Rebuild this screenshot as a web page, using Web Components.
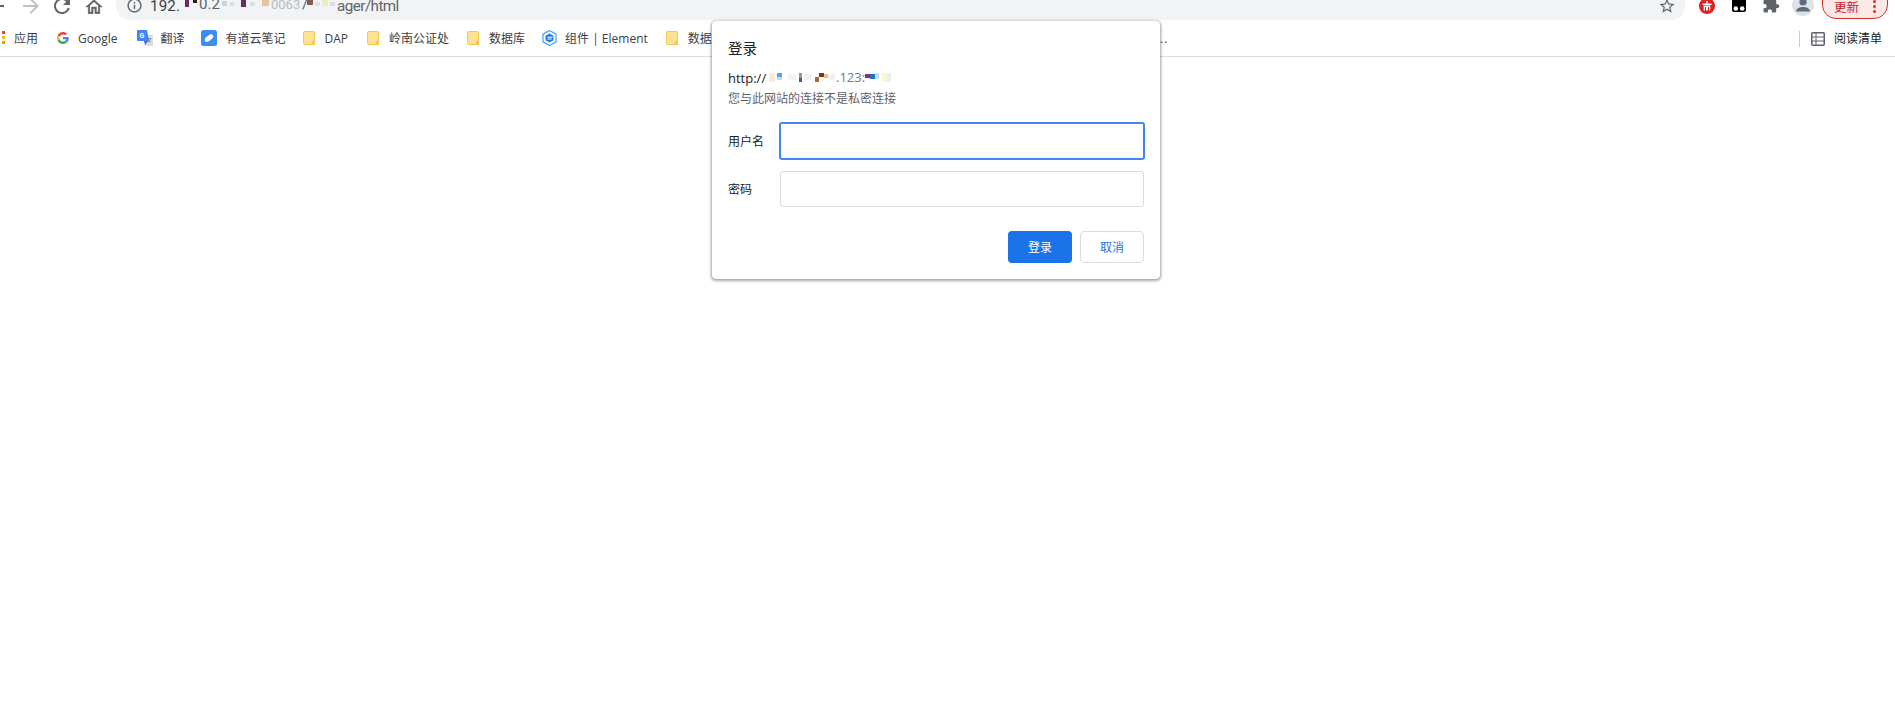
<!DOCTYPE html>
<html lang="zh">
<head>
<meta charset="utf-8">
<title>登录</title>
<style>
    html, body { margin: 0; height: 100%; background: #fff; }
    body { font-family: "Open Sans", "Noto Sans CJK SC", sans-serif; }
</style>
</head>
<body>
<browser-page>
    <browser-toolbar></browser-toolbar>
    <bookmark-bar>
        <bookmark-item label="应用" icon="apps" gap="8" left="2"></bookmark-item>
        <bookmark-item label="Google" icon="google" gap="9" left="19"></bookmark-item>
        <bookmark-item label="翻译" icon="translate" gap="7" left="20"></bookmark-item>
        <bookmark-item label="有道云笔记" icon="youdao" gap="8" left="17"></bookmark-item>
        <bookmark-item label="DAP" icon="folder" gap="10" left="17"></bookmark-item>
        <bookmark-item label="岭南公证处" icon="folder" gap="10" left="19"></bookmark-item>
        <bookmark-item label="数据库" icon="folder" gap="10" left="18"></bookmark-item>
        <bookmark-item label="组件 | Element" icon="element" gap="8" left="17"></bookmark-item>
        <bookmark-item label="数据治理" icon="folder" gap="10" left="18"></bookmark-item>
    </bookmark-bar>
    <login-dialog></login-dialog>
</browser-page>

<script>
class BrowserPage extends HTMLElement {
    constructor() {
        super();

        this.attachShadow({ mode: 'open' });

        this.shadowRoot.innerHTML = `
            <style>
                :host {
                    display: block;
                    position: relative;
                    height: 719px;
                    overflow: hidden;
                    background: #fff;
                }
            </style>
            <slot></slot>
        `;
    }
}

class BrowserToolbar extends HTMLElement {
    constructor() {
        super();

        this.attachShadow({ mode: 'open' });

        this.shadowRoot.innerHTML = `
            <style>
                :host {
                    display: flex;
                    align-items: flex-end;
                    height: 20px;
                    overflow: hidden;
                    background: #fff;
                    color: #5f6368;
                }
                svg { display: block; flex: none; fill: currentColor; }
                .back { margin: 0 0 2px -16px; }
                .forward { margin: 0 0 2px 11px; color: #bdc1c6; }
                .reload { margin: 0 0 2px 7px; }
                .home { margin: 0 0 3px 10px; stroke: currentColor; stroke-width: .4; }
                .omnibox {
                    flex: none;
                    display: flex;
                    align-items: flex-end;
                    box-sizing: border-box;
                    width: 1569px;
                    height: 36px;
                    margin-left: 12px;
                    padding: 0 9px 5px 10px;
                    background: #f1f3f4;
                    border-radius: 0 0 14px 14px;
                }
                .info { margin: 0 7px 1px 0; }
                .url {
                    font: 15.2px/18px Roboto, "Liberation Sans", sans-serif;
                    letter-spacing: .12px;
                    color: #5f6368;
                }
                .url.host { color: #3c4043; }
                .url.path { letter-spacing: -.55px; }
                .mosaic { margin-bottom: 3px; fill: none; }
                .star { margin-left: auto; }
                .red { margin: 0 0 6px 14px; }
                .tamper { margin: 0 0 8px 16px; }
                .puzzle { margin: 0 0 6px 15px; }
                .avatar { margin: 0 0 4px 12px; }
                update-chip { margin: 0 0 1px 8px; }
            </style>
            <svg class="back" width="24" height="24" viewBox="0 0 24 24"><path d="M20 11H7.83l5.59-5.59L12 4l-8 8 8 8 1.41-1.41L7.83 13H20v-2z"/></svg>
            <svg class="forward" width="24" height="24" viewBox="0 0 24 24"><path d="M12 4l-1.41 1.41L16.17 11H4v2h12.17l-5.58 5.59L12 20l8-8z"/></svg>
            <svg class="reload" width="24" height="24" viewBox="0 0 24 24"><path d="M17.65 6.35A7.958 7.958 0 0 0 12 4c-4.42 0-7.99 3.58-7.99 8s3.57 8 7.99 8c3.73 0 6.84-2.55 7.73-6h-2.08A5.99 5.99 0 0 1 12 18c-3.31 0-6-2.69-6-6s2.69-6 6-6c1.66 0 3.14.69 4.22 1.78L13 11h7V4l-2.35 2.35z"/></svg>
            <svg class="home" width="20" height="20" viewBox="0 0 24 24"><path d="M12 5.69l5 4.5V18h-2v-6H9v6H7v-7.81l5-4.5M12 3L2 12h3v8h6v-6h2v6h6v-8h3L12 3z"/></svg>
            <div class="omnibox">
                <svg class="info" width="17" height="17" viewBox="0 0 24 24"><path d="M11 7h2v2h-2zm0 4h2v6h-2zm1-9C6.48 2 2 6.48 2 12s4.48 10 10 10 10-4.48 10-10S17.52 2 12 2zm0 18c-4.41 0-8-3.59-8-8s3.59-8 8-8 8 3.59 8 8-3.59 8-8 8z"/></svg>
                <span class="url host">192.</span>
                <svg class="mosaic" width="157" height="16" viewBox="0 0 157 16">
                    <rect x="5" y="1" width="4" height="10" fill="#6a2a70"/>
                    <rect x="13" y="1" width="4" height="6" fill="#222"/>
                    <text x="19" y="13" font-size="15" fill="#5f6368" font-family="Roboto, sans-serif">0.2</text>
                    <rect x="42" y="5" width="5" height="5" fill="#c9d3da"/>
                    <rect x="50" y="6" width="4" height="4" fill="#d8dde0"/>
                    <rect x="61" y="1" width="5" height="10" fill="#6a2a70"/>
                    <rect x="70" y="6" width="5" height="4" fill="#dcdfe2"/>
                    <rect x="82" y="4" width="7" height="6" fill="#e8c39e"/>
                    <text x="91" y="13" font-size="13" fill="#b9bdc2" font-family="Roboto, sans-serif">0063</text>
                    <text x="122" y="13" font-size="15" fill="#5f6368" font-family="Roboto, sans-serif">/</text>
                    <rect x="127" y="3" width="6" height="6" fill="#8a5a50"/>
                    <rect x="135" y="6" width="5" height="4" fill="#dfe3e6"/>
                    <rect x="142" y="4" width="6" height="6" fill="#eeeac0"/>
                    <rect x="150" y="6" width="5" height="4" fill="#d8dde0"/>
                </svg>
                <span class="url path">ager/html</span>
                <svg class="star" width="18" height="18" viewBox="0 0 24 24"><path d="M22 9.24l-7.19-.62L12 2 9.19 8.63 2 9.24l5.46 4.73L5.82 21 12 17.27 18.18 21l-1.63-7.03L22 9.24zM12 15.4l-3.76 2.27 1-4.28-3.32-2.88 4.38-.38L12 6.1l1.71 4.04 4.38.38-3.32 2.88 1 4.28L12 15.4z"/></svg>
            </div>
            <svg class="red" width="16" height="16" viewBox="0 0 16 16" style="fill:none">
                <circle cx="8" cy="8" r="8" fill="#e02020"/>
                <path d="M3.5 5.5h9v1.4h-9zM7.3 3h1.4v3H7.3zM4.7 7.5h6.6v5H10V9H9v3.5H7V9H6v3.5H4.7z" fill="#fff"/>
            </svg>
            <svg class="tamper" width="16" height="13" viewBox="0 0 16 13" style="fill:none">
                <rect x="1" y="-2" width="14" height="15" rx="2" fill="#000"/>
                <circle cx="4.8" cy="9.5" r="2.3" fill="#fff"/>
                <circle cx="11.2" cy="9.5" r="2.3" fill="#fff"/>
            </svg>
            <svg class="puzzle" width="18" height="18" viewBox="0 0 24 24"><path d="M20.5 11H19V7c0-1.1-.9-2-2-2h-4V3.5C13 2.12 11.88 1 10.5 1S8 2.12 8 3.5V5H4c-1.1 0-1.99.9-1.99 2v3.8H3.5c1.49 0 2.7 1.21 2.7 2.7s-1.21 2.7-2.7 2.7H2V20c0 1.1.9 2 2 2h3.8v-1.5c0-1.49 1.21-2.7 2.7-2.7 1.49 0 2.7 1.21 2.7 2.7V22H17c1.1 0 2-.9 2-2v-4h1.5c1.38 0 2.5-1.12 2.5-2.5S21.88 11 20.5 11z"/></svg>
            <svg class="avatar" width="22" height="22" viewBox="0 0 22 22" style="fill:none">
                <circle cx="11" cy="11" r="11" fill="#dee1e6"/>
                <circle cx="11" cy="8" r="3.6" fill="#5b6b80"/>
                <path d="M4 17.5c0-3.3 4-4.6 7-4.6s7 1.3 7 4.6z" fill="#5b6b80"/>
            </svg>
            <update-chip>更新</update-chip>
        `;
    }
}

class UpdateChip extends HTMLElement {
    constructor() {
        super();

        this.attachShadow({ mode: 'open' });

        this.shadowRoot.innerHTML = `
            <style>
                :host {
                    display: flex;
                    align-items: flex-end;
                    flex: none;
                    box-sizing: border-box;
                    width: 66px;
                    height: 32px;
                    padding: 0 0 3px 11px;
                    background: #fce8e6;
                    border: 1px solid #d93025;
                    border-radius: 14px;
                    color: #c5221f;
                    font: 12.5px/16px "Noto Sans CJK SC", sans-serif;
                }
                .dots { display: grid; gap: 2px; margin: 0 0 2px 14px; }
                .dots i { width: 3px; height: 3px; border-radius: 50%; background: #d93025; }
            </style>
            <slot></slot>
            <div class="dots"><i></i><i></i><i></i></div>
        `;
    }
}

class BookmarkBar extends HTMLElement {
    constructor() {
        super();

        this.attachShadow({ mode: 'open' });

        this.shadowRoot.innerHTML = `
            <style>
                :host {
                    display: flex;
                    align-items: center;
                    box-sizing: border-box;
                    height: 37px;
                    padding: 1px 13px 0 0;
                    background: #fff;
                    border-bottom: 1px solid #dadce0;
                    color: #3c4043;
                    font: 12px/16px "Open Sans", "Noto Sans CJK SC", sans-serif;
                }
                .more { margin-left: 420px; letter-spacing: 1px; }
                .reader {
                    display: flex;
                    align-items: center;
                    gap: 9px;
                    height: 16px;
                    margin-left: auto;
                    padding-left: 11px;
                    border-left: 1px solid #c8cacd;
                    color: #202124;
                }
                svg { display: block; }
            </style>
            <slot></slot>
            <span class="more">...</span>
            <div class="reader">
                <svg width="14" height="14" viewBox="0 0 14 14" fill="none" stroke="#5f6368" stroke-width="1.5">
                    <rect x=".75" y=".75" width="12.5" height="12.5" rx="1"/>
                    <path d="M5 1v12M1 5h12M1 9h12" stroke-width="1"/>
                </svg>
                <span>阅读清单</span>
            </div>
        `;
    }
}

class BookmarkItem extends HTMLElement {
    constructor() {
        super();

        this.attachShadow({ mode: 'open' });
    }

    connectedCallback() {
        const icons = {
            apps: `<svg width="4" height="14" viewBox="0 0 4 14"><rect y="0" width="3" height="3" fill="#ea4335"/><rect y="5" width="3" height="3" fill="#fbbc05"/><rect y="10" width="3" height="3" fill="#f29900"/></svg>`,
            google: `<svg width="12" height="12" viewBox="0 0 48 48"><path fill="#EA4335" d="M24 9.5c3.54 0 6.71 1.22 9.21 3.6l6.85-6.85C35.9 2.38 30.47 0 24 0 14.62 0 6.51 5.38 2.56 13.22l7.98 6.19C12.43 13.72 17.74 9.5 24 9.5z"/><path fill="#4285F4" d="M46.98 24.55c0-1.57-.15-3.09-.38-4.55H24v9.02h12.94c-.58 2.96-2.26 5.48-4.78 7.18l7.73 6c4.51-4.18 7.09-10.36 7.09-17.65z"/><path fill="#FBBC05" d="M10.53 28.59c-.48-1.45-.76-2.99-.76-4.59s.27-3.14.76-4.59l-7.98-6.19C.92 16.46 0 20.12 0 24c0 3.88.92 7.54 2.56 10.78l7.97-6.19z"/><path fill="#34A853" d="M24 48c6.48 0 11.93-2.13 15.89-5.81l-7.73-6c-2.15 1.45-4.92 2.3-8.16 2.3-6.26 0-11.57-4.22-13.47-9.91l-7.98 6.19C6.51 42.62 14.62 48 24 48z"/></svg>`,
            translate: `<svg width="16" height="16" viewBox="0 0 16 16"><path d="M7 5h9v11H8z" fill="#dcdcdc"/><path d="M1 0h9l2 11H1a1 1 0 0 1-1-1V1a1 1 0 0 1 1-1z" fill="#4285f4"/><path d="M7 11l1 4 3-4z" fill="#3367d6"/><text x="2.5" y="8" font-size="7" font-weight="700" fill="#fff" font-family="Roboto, sans-serif">G</text><path d="M10.5 8.5H14M12 8v1M13.5 9c-.4 1.5-1.5 2.5-2.6 3M11 9.8c.6 1 1.4 1.8 2.5 2.2" stroke="#777" stroke-width=".8" fill="none"/></svg>`,
            youdao: `<svg width="16" height="16" viewBox="0 0 16 16"><rect width="16" height="16" rx="2.5" fill="#3b8df2"/><path d="M4 11.5c-.4-1.8 0-3.4 1.3-4.5l4-2.8c.6-.4 1.5-.3 1.9.3l.9 1.3c.4.6.3 1.4-.2 1.9l-3.2 3c-1.2 1-2.9 1.3-4.7.8z" fill="#fff"/></svg>`,
            folder: `<svg width="12" height="14" viewBox="0 0 12 14"><path d="M1.5.5h9a1 1 0 0 1 1 1v9l-2 3h-8a1 1 0 0 1-1-1v-11a1 1 0 0 1 1-1z" fill="#fde293" stroke="#f2c94c"/><rect x="9" y="10" width="3" height="4" fill="#f2c94c"/></svg>`,
            element: `<svg width="15" height="16" viewBox="0 0 15 16"><path d="M7.5.5L14 4.2v7.6l-6.5 3.7L1 11.8V4.2z" fill="#fff" stroke="#409eff" stroke-width="1.2"/><path d="M7.5 3.5l4 2.2v4.600l-4 2.200-4-2.200V5.700z" fill="#1a7fe0"/><path d="M5.5 7.2h5M5.5 9h4" stroke="#fff"/></svg>`
        };

        this.shadowRoot.innerHTML = `
            <style>
                :host {
                    display: flex;
                    align-items: center;
                    flex: none;
                    gap: ${this.getAttribute('gap')}px;
                    margin-left: ${this.getAttribute('left')}px;
                }
                svg { display: block; flex: none; margin-top: -2px; }
            </style>
            ${icons[this.getAttribute('icon')]}
            <span>${this.getAttribute('label')}</span>
        `;
    }
}

class LoginDialog extends HTMLElement {
    constructor() {
        super();

        this.attachShadow({ mode: 'open' });

        this.shadowRoot.innerHTML = `
            <style>
                :host {
                    position: absolute;
                    left: 712px;
                    top: 21px;
                    box-sizing: border-box;
                    width: 448px;
                    height: 258px;
                    padding: 17px 16px 16px;
                    background: #fff;
                    border-radius: 4px;
                    box-shadow: 0 0 1px rgba(60, 64, 67, .5), 0 1px 3px 1px rgba(60, 64, 67, .45);
                    color: #202124;
                    font: 12px/16px "Noto Sans CJK SC", sans-serif;
                }
                h1 { margin: 0; font: 400 14.5px/20px "Noto Sans CJK SC", sans-serif; }
                .origin { display: flex; align-items: center; height: 18px; margin-top: 11px; font: 13px/18px "Open Sans", sans-serif; }
                .mosaic { display: block; }
                .note { margin-top: 2px; color: #5f6368; line-height: 18px; }
                form { display: grid; grid-template-columns: 52px 1fr; row-gap: 11px; align-items: center; margin-top: 15px; }
                .field {
                    display: block;
                    box-sizing: border-box;
                    width: 364px;
                    height: 36px;
                    border: 1px solid #dadce0;
                    border-radius: 3px;
                    outline: none;
                    background: #fff;
                    padding: 0 8px;
                }
                .focused { width: 366px; height: 38px; margin-left: -1px; border: 2px solid #4285f4; }
                .actions { display: flex; justify-content: flex-end; gap: 8px; margin-top: 24px; }
                .actions button {
                    box-sizing: border-box;
                    width: 64px;
                    height: 32px;
                    border-radius: 4px;
                    font: 12px/16px "Noto Sans CJK SC", sans-serif;
                }
                .primary { border: 0; background: #1a73e8; color: #fff; }
                .cancel { border: 1px solid #dadce0; background: #fff; color: #1a73e8; }
            </style>
            <h1>登录</h1>
            <div class="origin">
                <span>http://</span>
                <svg class="mosaic" width="130" height="16" viewBox="0 0 130 16" fill="none">
                    <rect x="3" y="3" width="6" height="9" fill="#fde9d8"/>
                    <rect x="11" y="3" width="5" height="4" fill="#5aa6d8"/>
                    <rect x="11" y="7" width="5" height="3" fill="#bfe0f2"/>
                    <rect x="22" y="4" width="8" height="6" fill="#f3f3f3"/>
                    <rect x="33" y="3" width="3" height="5" fill="#8f9f7c"/>
                    <rect x="33" y="8" width="3" height="4" fill="#34659a"/>
                    <rect x="38" y="4" width="8" height="6" fill="#f1f1f1"/>
                    <rect x="53" y="3" width="5" height="4" fill="#8a2f2a"/>
                    <rect x="49" y="7" width="4" height="5" fill="#b06a30"/>
                    <rect x="58" y="4" width="4" height="4" fill="#f0c080"/>
                    <rect x="62" y="4" width="7" height="6" fill="#f1f1f1"/>
                    <text x="70" y="12" font-size="13" fill="#6f7a85" font-family="Open Sans, sans-serif">.123:</text>
                    <rect x="99" y="4" width="5" height="4" fill="#88307f"/>
                    <rect x="104" y="4" width="5" height="5" fill="#2a70b8"/>
                    <rect x="109" y="3" width="4" height="6" fill="#bfe0f2"/>
                    <rect x="116" y="3" width="5" height="9" fill="#fff7c8"/>
                    <rect x="121" y="3" width="4" height="9" fill="#e8f0f4"/>
                </svg>
            </div>
            <div class="note">您与此网站的连接不是私密连接</div>
            <form>
                <label>用户名</label>
                <input class="field focused" type="text" aria-label="用户名">
                <label>密码</label>
                <input class="field" type="password" aria-label="密码">
            </form>
            <div class="actions">
                <button class="primary" type="button">登录</button>
                <button class="cancel" type="button">取消</button>
            </div>
        `;
    }
}

customElements.define('browser-page', BrowserPage);
customElements.define('browser-toolbar', BrowserToolbar);
customElements.define('update-chip', UpdateChip);
customElements.define('bookmark-bar', BookmarkBar);
customElements.define('bookmark-item', BookmarkItem);
customElements.define('login-dialog', LoginDialog);
</script>
</body>
</html>
